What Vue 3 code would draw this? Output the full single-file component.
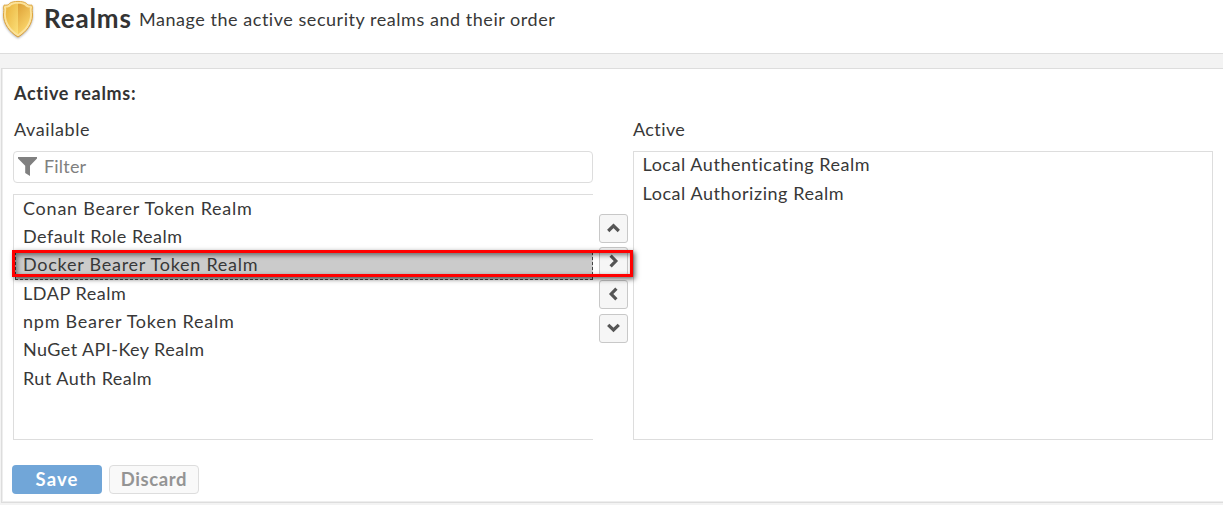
<script setup>
const available = [
  { name: 'Conan Bearer Token Realm', cls: 'conan' },
  { name: 'Default Role Realm', cls: 'default' },
  { name: 'Docker Bearer Token Realm', cls: 'docker' },
  { name: 'LDAP Realm', cls: 'ldap' },
  { name: 'npm Bearer Token Realm', cls: 'npm' },
  { name: 'NuGet API-Key Realm', cls: 'nuget' },
  { name: 'Rut Auth Realm', cls: 'rut' },
]
const selected = 'Docker Bearer Token Realm'
const active = [
  { name: 'Local Authenticating Realm', cls: 'authn' },
  { name: 'Local Authorizing Realm', cls: 'authz' },
]
const moves = [
  { dir: 'up', d: 'M1.200 10 L6.500 4.800 L11.800 10' },
  { dir: 'right', d: 'M3.600 1.700 L8.800 7 L3.600 12.300' },
  { dir: 'left', d: 'M9.400 1.700 L4.200 7 L9.400 12.300' },
  { dir: 'down', d: 'M1.200 3.800 L6.500 9 L11.800 3.800' },
]
</script>

<template>
  <div class="page">
    <header class="header">
      <svg class="shield" width="34" height="40" viewBox="0 0 34 40">
        <defs>
          <linearGradient id="rim" x1="0" y1="0" x2="0" y2="1">
            <stop offset="0" stop-color="#e2a93e" />
            <stop offset="1" stop-color="#d79a35" />
          </linearGradient>
          <linearGradient id="gl" x1="0" y1="0" x2="1" y2="1">
            <stop offset="0" stop-color="#e9b13b" />
            <stop offset="1" stop-color="#fbe07a" />
          </linearGradient>
          <linearGradient id="gr" x1="0" y1="0" x2="0.5" y2="1">
            <stop offset="0" stop-color="#dda036" />
            <stop offset="1" stop-color="#fbd76c" />
          </linearGradient>
        </defs>
        <path d="M18 1.400 C14.500 1.400 11.500 2 9.600 3.400 C8.600 5 6.500 5.600 4.200 5 L3.400 7.800 C4.400 9 3.500 11.500 3.500 15 C3.500 24 9.500 32 18 37 C26.500 32 32.500 24 32.500 15 C32.500 11.500 31.600 9 32.600 7.800 L31.800 5 C29.500 5.600 27.400 5 26.400 3.400 C24.500 2 21.500 1.400 18 1.400Z" fill="#fbe29a" stroke="url(#rim)" />
        <path d="M18 3.800 C15 3.800 12.500 4.400 11 5.500 C9.800 7 7.900 7.700 6.100 7.500 C6.500 10 5.800 12 5.800 14.500 C6 23 11 29.500 18 34.200Z" fill="url(#gl)" />
        <path d="M18 3.800 C21 3.800 23.500 4.400 25 5.500 C26.200 7 28.100 7.700 29.900 7.500 C29.500 10 30.200 12 30.200 14.500 C30 23 25 29.500 18 34.200Z" fill="url(#gr)" />
      </svg>
      <h1>Realms</h1>
      <p>Manage the active security realms and their order</p>
    </header>

    <main class="panel">
      <h2>Active realms:</h2>
      <div class="columns">
        <section class="col">
          <label class="avail-label">Available</label>
          <div class="filter">
            <svg width="20" height="20" viewBox="0 0 20 20"><path d="M0 0H19V1.600L12 8.800V19L7.200 16V8.800L0 1.600Z" fill="#808080" /></svg>
            <span>Filter</span>
          </div>
          <ul class="list source">
            <li v-for="r in available" :key="r.name" :class="{ selected: r.name === selected }"><span :class="r.cls">{{ r.name }}</span></li>
          </ul>
        </section>
        <div class="moves">
          <button v-for="m in moves" :key="m.dir" :class="m.dir">
            <svg width="14" height="14" viewBox="0 0 14 14"><path :d="m.d" fill="none" stroke="#555" stroke-width="3.200" /></svg>
          </button>
        </div>
        <section class="col">
          <label class="active-label">Active</label>
          <ul class="list target">
            <li v-for="r in active" :key="r.name"><span :class="r.cls">{{ r.name }}</span></li>
          </ul>
        </section>
      </div>
      <footer>
        <button class="save">Save</button>
        <button class="discard">Discard</button>
      </footer>
    </main>
    <div class="highlight"></div>
  </div>
</template>

<style>
body { background: #f3f3f3; overflow: hidden; }
</style>

<style scoped>
* { box-sizing: border-box; margin: 0; padding: 0; }
.page { position: relative; height: 505px; overflow: hidden; font: 18px/28px Lato, "Open Sans", sans-serif; color: #383838; }
.header { display: flex; height: 54px; background: #fff; border-bottom: 1px solid #ddd; }
.shield { filter: drop-shadow(0 1px 1px rgba(0,0,0,.3)); flex: none; }
h1 { margin-left: 10px; width: 95px; font-size: 26px; line-height: 37px; font-weight: 700; letter-spacing: .85px; white-space: nowrap; color: #333; }
.header p { line-height: 39px; letter-spacing: .54px; white-space: nowrap; }
.panel { margin: 14px 0 0 1px; height: 435px; background: #fff; border: 1px solid #ddd; border-right: 0; box-shadow: inset 1px -1px #eee; padding-left: 11px; }
h2 { font-size: 18px; line-height: 28px; height: 37px; padding: 10px 0 0 1px; letter-spacing: .68px; color: #333; }
.columns { display: flex; height: 334px; }
.col { width: 580px; }
label { display: block; height: 45px; padding-top: 9px; white-space: nowrap; }
.avail-label { margin-left: 1px; letter-spacing: .58px; }
.active-label { letter-spacing: .4px; }
.filter { display: flex; height: 32px; margin-bottom: 11px; border: 1px solid #ddd; border-radius: 4px; color: #808080; }
.filter svg { margin: 5px 6px 0 4px; }
.filter span { line-height: 29px; letter-spacing: .2px; }
.list { list-style: none; border: 1px solid #ddd; }
.source { height: 246px; border-right: 0; }
.target { height: 289px; }
li { height: 28.300px; line-height: 26.600px; padding-left: 9px; white-space: nowrap; }
.target li { height: 29px; line-height: 25px; padding-left: 8.500px; }
.selected { margin-left: 1px; padding-left: 7px; background: #cbcbcb; border: 1px dashed #444; line-height: 22.800px; }
.conan { letter-spacing: .77px; }
.default { letter-spacing: .47px; }
.docker { letter-spacing: .74px; }
.ldap { letter-spacing: .55px; }
.npm { letter-spacing: .75px; }
.nuget { letter-spacing: .43px; }
.rut { letter-spacing: .46px; }
.authn { letter-spacing: .54px; }
.authz { letter-spacing: .56px; }
.moves { width: 40px; padding: 108px 0 0 6px; display: flex; flex-direction: column; gap: 4.200px; }
.moves button { display: flex; align-items: center; justify-content: center; width: 29px; height: 29px; background: #f6f6f6; border: 1px solid #c8c8c8; border-radius: 3px; }
.moves svg { flex: none; margin-bottom: 1px; }
footer { display: flex; gap: 7px; padding-top: 25px; margin-left: -1px; }
footer button { width: 90px; height: 29px; border: 0; border-radius: 4px; font: 700 18.500px/27px Lato, sans-serif; padding-bottom: 1px; }
.save { background: #71a6d8; color: #fff; letter-spacing: 1.100px; }
.discard { background: #f9f9f9; color: #949494; border: 1px solid #ddd; letter-spacing: .6px; line-height: 25px; }
.highlight { position: absolute; left: 12px; top: 250px; width: 621px; height: 27px; border: 3px solid #f00; box-shadow: 2px 2px 5px rgba(0,0,0,.6), inset 2px 2px 5px rgba(0,0,0,.5); }
</style>
